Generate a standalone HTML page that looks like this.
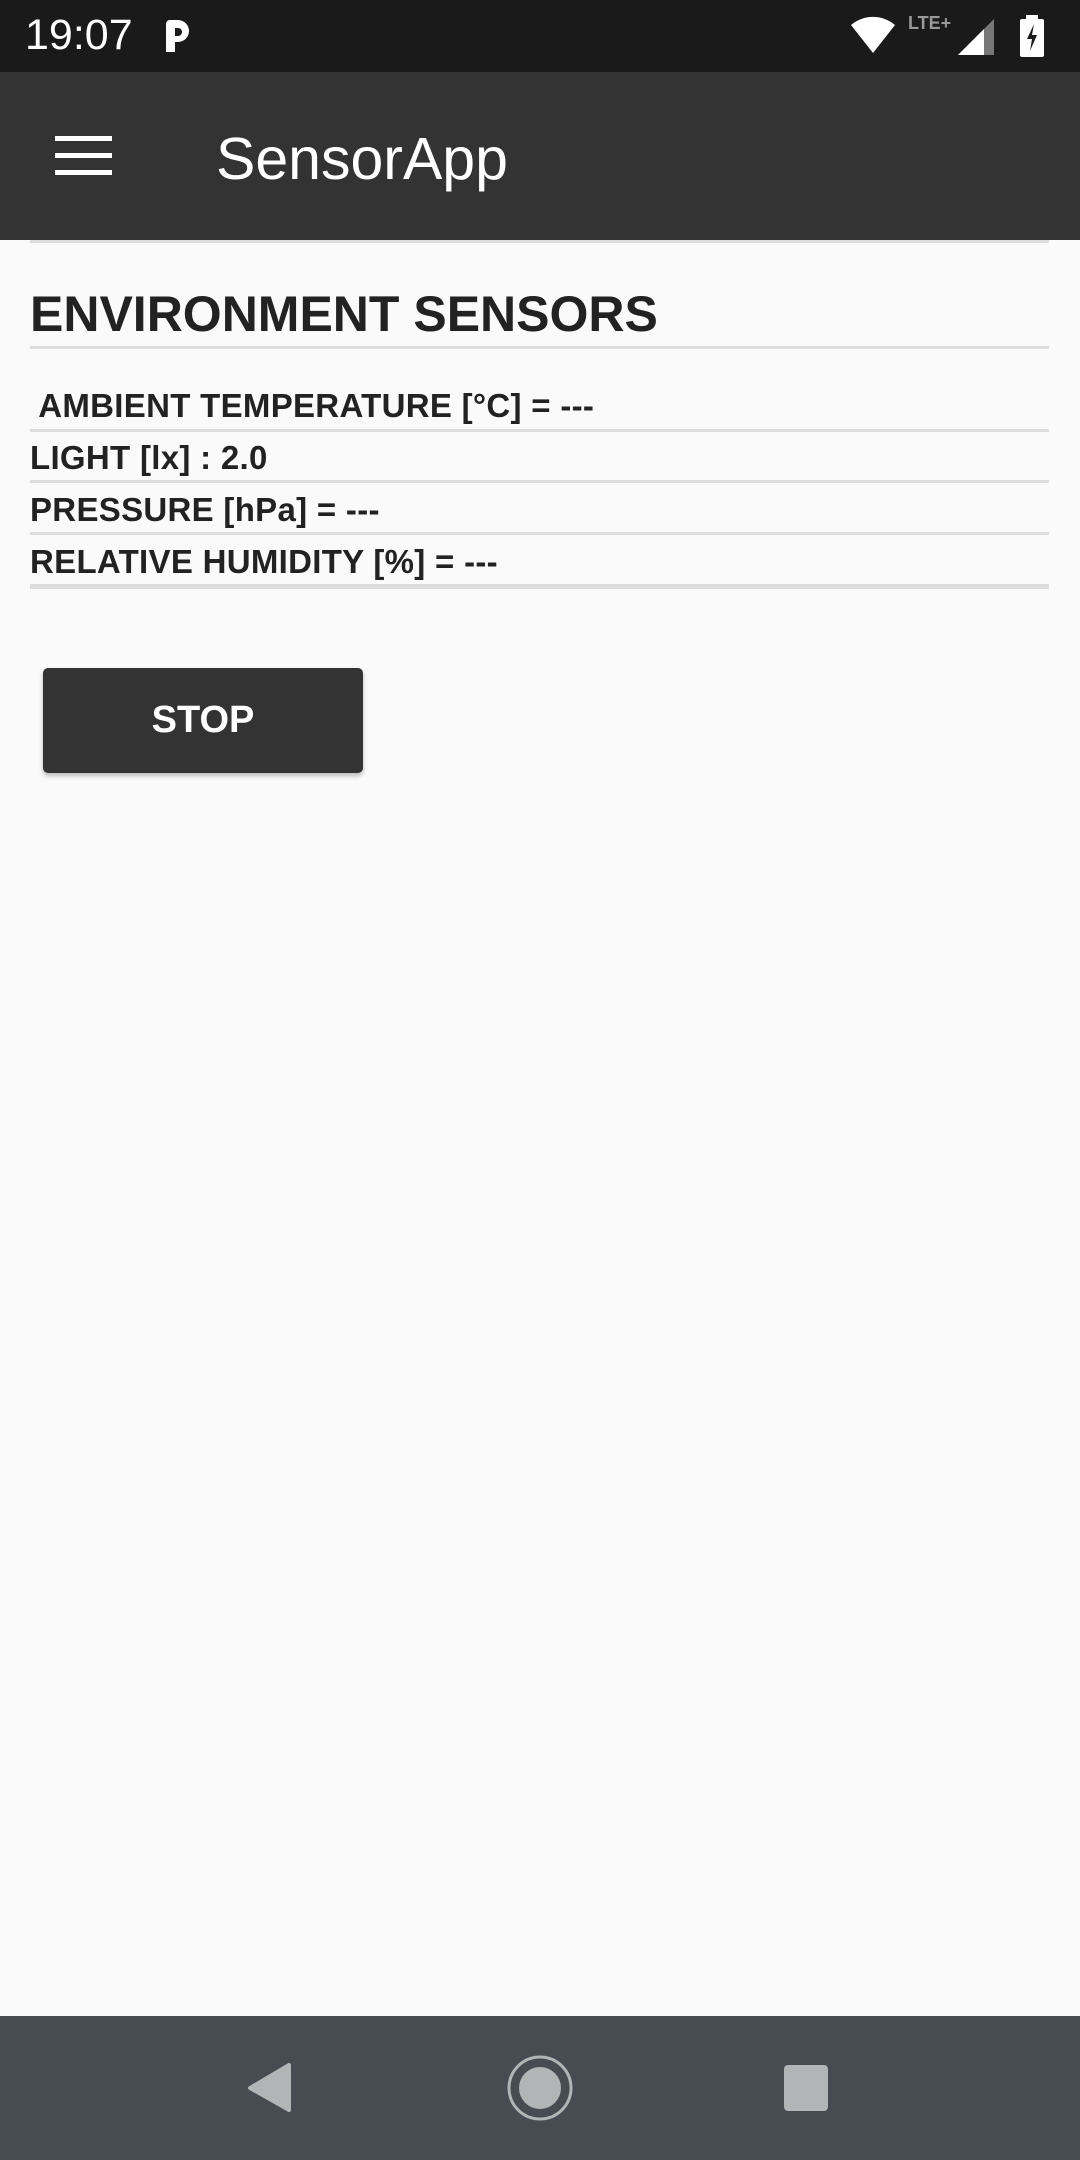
<!DOCTYPE html>
<html><head><meta charset="utf-8"><style>
*{margin:0;padding:0;box-sizing:border-box}
body{width:1080px;height:2160px;background:#fafafa;position:relative;overflow:hidden;font-family:"Liberation Sans",sans-serif;color:#222}
.abs{position:absolute}
.row{position:absolute;left:30px;font-weight:bold;font-size:33px;color:#222;white-space:pre;letter-spacing:0.3px}
.line{position:absolute;left:30px;width:1019px;height:3px;background:#ddd}
</style></head><body>
<div class="abs" style="left:0;top:0;width:1080px;height:72px;background:#1a1a1a"></div>
<div class="abs" style="left:25px;top:11px;font-size:43px;color:#fff">19:07</div>
<svg class="abs" style="left:160px;top:16px" width="36" height="40" viewBox="0 0 36 40"><path d="M6 36V8a4 4 0 0 1 4-4h8a11 11 0 0 1 0 22h-3v10z" fill="#fff"/><path d="M15 12h3a4 4 0 0 1 0 8h-3z" fill="#1a1a1a"/></svg>
<svg class="abs" style="left:849px;top:16px" width="48" height="38" viewBox="0 0 48 38"><path d="M2 9a34 34 0 0 1 44 0L24 37z" fill="#fff"/></svg>
<div class="abs" style="left:908px;top:13px;font-size:18px;color:#999;font-weight:bold">LTE+</div>
<svg class="abs" style="left:958px;top:19px" width="38" height="36" viewBox="0 0 38 36"><path d="M36 0V36H0z" fill="#777"/><path d="M26 10V36H0z" fill="#fff"/></svg>
<svg class="abs" style="left:1018px;top:15px" width="28" height="42" viewBox="0 0 28 42"><rect x="8" y="0" width="12" height="5" fill="#fff"/><rect x="2" y="4" width="24" height="38" rx="2" fill="#fff"/><path d="M16 9l-7 15h5l-2 12 7-16h-5z" fill="#1a1a1a"/></svg>

<div class="abs" style="left:0;top:72px;width:1080px;height:168px;background:#333"></div>
<div class="abs" style="left:55px;top:136px;width:57px;height:5px;background:#fff"></div>
<div class="abs" style="left:55px;top:153px;width:57px;height:5px;background:#fff"></div>
<div class="abs" style="left:55px;top:170px;width:57px;height:5px;background:#fff"></div>
<div class="abs" style="left:216px;top:125px;font-size:59px;color:#fff">SensorApp</div>

<div class="line" style="top:240px"></div>
<div class="abs" style="left:30px;top:285px;font-size:50px;font-weight:bold;color:#222">ENVIRONMENT SENSORS</div>
<div class="line" style="top:346px"></div>
<div class="row" style="top:387px"> AMBIENT TEMPERATURE [°C] = ---</div>
<div class="line" style="top:429px"></div>
<div class="row" style="top:439px">LIGHT [lx] : 2.0</div>
<div class="line" style="top:480px"></div>
<div class="row" style="top:491px">PRESSURE [hPa] = ---</div>
<div class="line" style="top:532px"></div>
<div class="row" style="top:543px">RELATIVE HUMIDITY [%] = ---</div>
<div class="line" style="top:584px;height:5px"></div>

<div class="abs" style="left:43px;top:668px;width:320px;height:105px;background:#333;border-radius:5px;box-shadow:0 3px 5px rgba(0,0,0,.25);color:#fff;font-size:38px;font-weight:bold;text-align:center;line-height:105px">STOP</div>

<div class="abs" style="left:0;top:2016px;width:1080px;height:144px;background:#464c52"></div>
<svg class="abs" style="left:0;top:2016px" width="1080" height="144"><path d="M289 49V94L250 72z" fill="#b1b5b6" stroke="#b1b5b6" stroke-width="4" stroke-linejoin="round"/><circle cx="540" cy="72" r="31" fill="none" stroke="#b1b5b6" stroke-width="3"/><circle cx="540" cy="72" r="21" fill="#b1b5b6"/><rect x="784" y="49" width="44" height="46" rx="4" fill="#b1b5b6"/></svg>
</body></html>
